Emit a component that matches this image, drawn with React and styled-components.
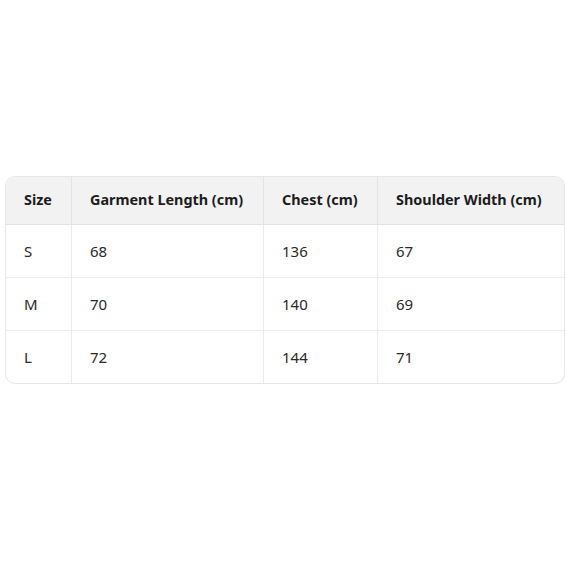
import React from 'react';
import styled, { createGlobalStyle } from 'styled-components';

const GlobalStyle = createGlobalStyle`
  html, body {
    margin: 0;
    padding: 0;
    background: #ffffff;
  }
  body {
    font-family: "Noto Sans", "Open Sans", "Liberation Sans", sans-serif;
  }
`

const Page = styled.div`
  width: 566px;
  height: 566px;
  box-sizing: border-box;
  padding: 176px 0 0 5px;
`

const Table = styled.table`
  width: 560px;
  border-collapse: separate;
  border-spacing: 0;
  border: 1px solid #e6e6e6;
  border-radius: 10px;
  overflow: hidden;
  table-layout: fixed;
`

const HeadCell = styled.th`
  background: #f2f2f2;
  color: #1c1c1c;
  font-size: 14.4px;
  font-weight: 700;
  text-align: left;
  height: 48px;
  padding: 0 0 3px 18px;
  box-sizing: border-box;
  border-left: ${({ first }) => (first ? 'none' : '1px solid #e3e3e3')};
  border-bottom: 1px solid #e3e3e3;
`

const Cell = styled.td`
  color: #2a2a2a;
  font-size: 15px;
  font-weight: 400;
  height: 52px;
  padding: 0 0 0 18px;
  border-left: ${({ first }) => (first ? 'none' : '1px solid #ececec')};
  border-bottom: ${({ last }) => (last ? 'none' : '1px solid #ececec')};
`

const columns = [
  { label: 'Size', width: 65 },
  { label: 'Garment Length (cm)', width: 192 },
  { label: 'Chest (cm)', width: 114 },
  { label: 'Shoulder Width (cm)', width: 187 },
];

const rows = [
  ['S', '68', '136', '67'],
  ['M', '70', '140', '69'],
  ['L', '72', '144', '71'],
];

const App = () => {
  return (
    <Page>
      <GlobalStyle />
      <Table>
        <colgroup>
          {columns.map((c) => (
            <col key={c.label} style={{ width: c.width }} />
          ))}
        </colgroup>
        <thead>
          <tr>
            {columns.map((c, i) => (
              <HeadCell key={c.label} first={i === 0}>{c.label}</HeadCell>
            ))}
          </tr>
        </thead>
        <tbody>
          {rows.map((row, r) => (
            <tr key={row[0]}>
              {row.map((v, i) => (
                <Cell key={i} first={i === 0} last={r === rows.length - 1}>{v}</Cell>
              ))}
            </tr>
          ))}
        </tbody>
      </Table>
    </Page>
  )
}

export default App
